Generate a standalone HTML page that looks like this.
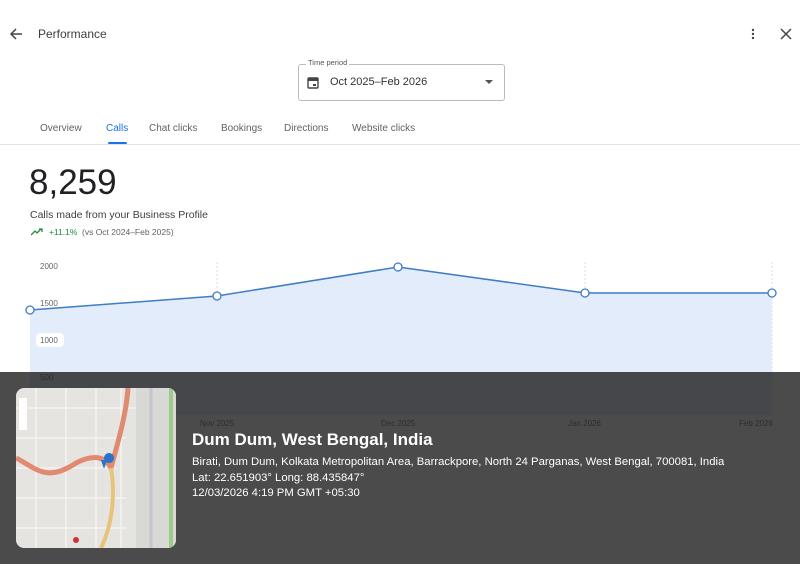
<!DOCTYPE html>
<html><head><meta charset="utf-8"><style>
*{margin:0;padding:0;box-sizing:border-box}
body{width:800px;height:564px;overflow:hidden;background:#fff;font-family:"Liberation Sans",Arial,sans-serif;position:relative;color:#202124}
.a{position:absolute}
.tab{position:absolute;top:123px;font-size:10px;color:#5f6368}
</style></head><body>
<svg class="a" style="left:9px;top:27px" width="14" height="14" viewBox="0 0 14 14"><path d="M13 7H2M7 2L2 7l5 5" stroke="#444" stroke-width="1.5" fill="none"/></svg>
<div class="a" style="left:38px;top:27px;font-size:12px;color:#3c4043">Performance</div>
<svg class="a" style="left:750px;top:28px" width="6" height="12"><circle cx="3" cy="2" r="1.2" fill="#444"/><circle cx="3" cy="6" r="1.2" fill="#444"/><circle cx="3" cy="10" r="1.2" fill="#444"/></svg>
<svg class="a" style="left:780px;top:28px" width="12" height="12"><path d="M1 1L11 11M11 1L1 11" stroke="#444" stroke-width="1.5"/></svg>
<div class="a" style="left:298px;top:64px;width:207px;height:37px;border:1px solid #bbb;border-radius:3px"></div>
<div class="a" style="left:306px;top:58px;background:#fff;padding:0 2px;font-size:7.5px;color:#555">Time period</div>
<svg class="a" style="left:307px;top:76px" width="12" height="13"><rect x="1" y="2" width="10" height="10" rx="1" fill="none" stroke="#444" stroke-width="1.4"/><rect x="1" y="2" width="10" height="3" fill="#444"/><rect x="6" y="8" width="3" height="2" fill="#444"/></svg>
<div class="a" style="left:330px;top:76px;font-size:11px;color:#333">Oct 2025–Feb 2026</div>
<svg class="a" style="left:485px;top:80px" width="8" height="5"><path d="M0 0h8L4 4z" fill="#555"/></svg>
<div class="tab" style="left:40px">Overview</div>
<div class="tab" style="left:106px;color:#1a73e8">Calls</div>
<div class="a" style="left:108px;top:142px;width:19px;height:2px;background:#1a73e8;border-radius:1px"></div>
<div class="tab" style="left:149px">Chat clicks</div>
<div class="tab" style="left:221px">Bookings</div>
<div class="tab" style="left:284px">Directions</div>
<div class="tab" style="left:352px">Website clicks</div>
<div class="a" style="left:0;top:144px;width:800px;height:1px;background:#e3e3e3"></div>
<div class="a" style="left:29px;top:163px;font-size:35px;color:#202124">8,259</div>
<div class="a" style="left:30px;top:209px;font-size:10.5px;color:#3c4043">Calls made from your Business Profile</div>
<svg class="a" style="left:31px;top:228px" width="12" height="8"><path d="M0 7l4-4 2 2 4-4M8 1h3v3" stroke="#1e8e3e" stroke-width="1.3" fill="none"/></svg>
<div class="a" style="left:49px;top:227px;font-size:8.5px;color:#1e8e3e">+11.1%</div>
<div class="a" style="left:82px;top:227px;font-size:8.5px;color:#5f6368">(vs Oct 2024–Feb 2025)</div>
<svg class="a" style="left:0;top:0" width="800" height="564">
<g stroke="#ddd" stroke-dasharray="2 2"><line x1="217" y1="262" x2="217" y2="415"/><line x1="398" y1="262" x2="398" y2="415"/><line x1="585" y1="262" x2="585" y2="415"/><line x1="772" y1="262" x2="772" y2="415"/></g>
<path d="M30 310L217 296L398 267L585 293L772 293V415H30Z" fill="#e2ecfb"/>
<path d="M30 310L217 296L398 267L585 293L772 293" stroke="#3f7dc4" stroke-width="1.5" fill="none"/>
<g fill="#fff" stroke="#3f7dc4" stroke-width="1.3"><circle cx="30" cy="310" r="4"/><circle cx="217" cy="296" r="4"/><circle cx="398" cy="267" r="4"/><circle cx="585" cy="293" r="4"/><circle cx="772" cy="293" r="4"/></g>
<g font-size="8" fill="#666" font-family="Liberation Sans"><text x="40" y="269">2000</text><text x="40" y="306">1500</text><rect x="36" y="333" width="28" height="14" rx="4" fill="#fff"/><text x="40" y="343" fill="#666">1000</text><text x="40" y="380">500</text>
<text x="200" y="426">Nov 2025</text><text x="381" y="426">Dec 2025</text><text x="568" y="426">Jan 2026</text><text x="739" y="426">Feb 2026</text></g>
</svg>
<div class="a" style="left:0;top:372px;width:800px;height:192px;background:rgba(30,30,30,0.8)"></div>
<svg class="a" style="left:16px;top:388px" width="160" height="160" viewBox="0 0 160 160"><defs><clipPath id="c"><rect width="160" height="160" rx="8"/></clipPath></defs><g clip-path="url(#c)"><rect width="160" height="160" fill="#e6e4e0"/><rect x="120" y="0" width="40" height="160" fill="#d8d8d4"/><g stroke="#fff" stroke-width="1" opacity=".8"><path d="M0 20h120M0 50h110M0 80h100M0 110h110M0 140h110M20 0v160M50 0v160M80 0v160M105 0v160"/></g><path d="M0 70C20 80 30 95 60 75C80 65 90 70 95 80C100 60 110 30 112 0" stroke="#e08a72" stroke-width="5" fill="none"/><path d="M95 80C100 110 95 140 85 160" stroke="#e8c47a" stroke-width="4" fill="none"/><path d="M135 0v160" stroke="#c4c4cc" stroke-width="3"/><path d="M155 0v160" stroke="#9acd8a" stroke-width="4"/><path d="M88 70a5 5 0 1 1 0 .1z" fill="#2a73c8"/><path d="M85 72l3 9 3-9z" fill="#2a73c8"/><rect x="3" y="10" width="8" height="32" fill="#fff"/><circle cx="60" cy="152" r="3" fill="#c33"/></g></svg>
<div class="a" style="left:192px;top:430px;font-size:17px;font-weight:bold;color:#fff">Dum Dum, West Bengal, India</div>
<div class="a" style="left:192px;top:455px;font-size:11.3px;color:#fff;line-height:15.5px">Birati, Dum Dum, Kolkata Metropolitan Area, Barrackpore, North 24 Parganas, West Bengal, 700081, India<br>Lat: 22.651903° Long: 88.435847°<br>12/03/2026 4:19 PM GMT +05:30</div>
</body></html>
